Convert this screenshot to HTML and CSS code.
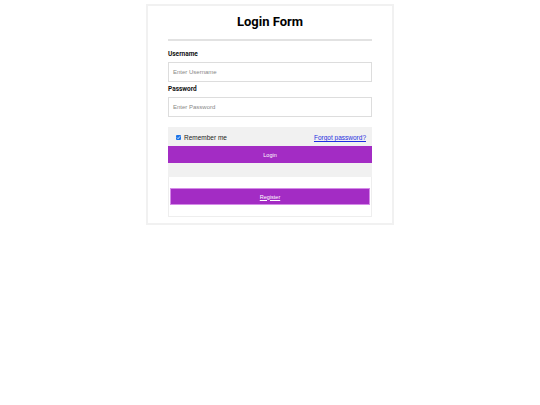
FILE: index.html
```html
<!DOCTYPE html>
<html>
<head>
<meta charset="utf-8">
<link rel="stylesheet" href="styles.css">
</head>
<body>
<div class="card">
  <h1 class="title">Login Form</h1>
  <div class="rule"></div>
  <label class="label">Username</label>
  <div class="input"><span class="ph">Enter Username</span></div>
  <label class="label">Password</label>
  <div class="input"><span class="ph">Enter Password</span></div>
  <div class="graybox">
    <div class="row">
      <label class="remember"><span class="check"><svg width="6" height="6" viewBox="0 0 6 6"><path d="M1.2 3.1 L2.5 4.4 L4.9 1.6" fill="none" stroke="#fff" stroke-width="1"/></svg></span>Remember me</label>
      <a class="forgot" href="#">Forgot password?</a>
    </div>
    <div class="btn login">Login</div>
  </div>
  <div class="regbox">
    <div class="btn register"><a href="#">Register</a></div>
  </div>
</div>
</body>
</html>
```
FILE: styles.css
```css
html, body { margin: 0; padding: 0; background: #fff; }
body { font-family: Roboto, "Liberation Sans", sans-serif; color: #111; }
.card {
  box-sizing: border-box;
  width: 248px;
  margin: 4px auto 0;
  border: 2px solid #f1f1f1;
  padding: 8px 20px 6px;
  display: flex;
  flex-direction: column;
}
.title {
  margin: 0;
  font-size: 13px;
  line-height: 16px;
  font-weight: 700;
  text-align: center;
  color: #000;
}
.rule {
  height: 2px;
  background: #e2e2e2;
  margin: 9px 0 9px;
}
.label {
  font-size: 6.5px;
  line-height: 9px;
  font-weight: 700;
  margin-bottom: 3px;
  color: #111;
}
.input {
  box-sizing: border-box;
  height: 20px;
  border: 1px solid #ddd;
  display: flex;
  align-items: center;
  padding-left: 4px;
  margin-bottom: 3px;
}
.ph {
  font-family: "Liberation Sans", Arial, sans-serif;
  font-size: 6px;
  color: #888;
}
.graybox {
  margin-top: 7px;
  background: #f1f1f1;
  padding-top: 2px;
  padding-bottom: 14px;
}
.row {
  display: flex;
  justify-content: space-between;
  align-items: center;
  height: 17px;
  padding: 0 6px 0 8px;
}
.remember {
  display: flex;
  align-items: center;
  font-family: "Liberation Sans", Arial, sans-serif;
  font-size: 6.5px;
  color: #222;
}
.check {
  width: 5px;
  height: 5px;
  background: #1a73e8;
  border-radius: 1px;
  margin-right: 3px;
  display: flex;
  align-items: center;
  justify-content: center;
}
.check svg { width: 5px; height: 5px; }
.forgot {
  font-family: "Liberation Sans", Arial, sans-serif;
  font-size: 6.5px;
  color: #1f2fe0;
  text-decoration: underline;
}
.btn {
  box-sizing: border-box;
  height: 17px;
  background: #a32cc4;
  color: #fff;
  display: flex;
  align-items: center;
  justify-content: center;
  font-family: "Liberation Sans", Arial, sans-serif;
  font-size: 5.5px;
}
.regbox {
  border: 1px solid #eee;
  border-top: none;
  padding: 11px 1px 11px;
  display: flex;
  flex-direction: column;
}
.register {
  border: 1px solid #d58ae8;
}
.register a { color: #fff; text-decoration: underline; }
```
